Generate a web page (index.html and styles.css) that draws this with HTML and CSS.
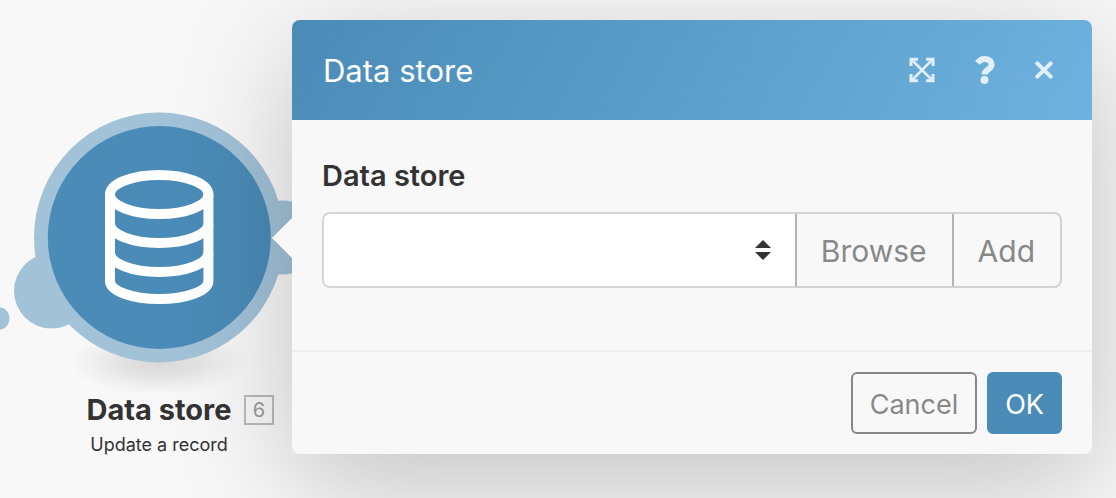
FILE: index.html
```html
<!DOCTYPE html>
<html lang="en">
<head>
<meta charset="utf-8">
<meta name="viewport" content="width=device-width, initial-scale=1">
<title>Data store</title>
<link rel="stylesheet" href="styles.css">
</head>
<body>
<main class="scenario">
  <figure class="module">
    <svg class="module-art" viewBox="0 0 292 392" aria-hidden="true">
      <defs>
        <radialGradient id="floor">
          <stop offset="0" stop-color="#000" stop-opacity=".13"/>
          <stop offset=".4" stop-color="#000" stop-opacity=".09"/>
          <stop offset=".7" stop-color="#000" stop-opacity=".04"/>
          <stop offset="1" stop-color="#000" stop-opacity="0"/>
        </radialGradient>
      </defs>
      <ellipse cx="159" cy="362" rx="90" ry="34" fill="url(#floor)"/>
      <g fill="#a2c2d8">
        <circle cx="-2" cy="318.500" r="11.500"/>
        <circle cx="51.500" cy="291" r="37.500"/>
        <circle cx="282" cy="237.500" r="37"/>
        <circle cx="159" cy="237.500" r="125"/>
      </g>
      <circle cx="159.300" cy="237.500" r="111.500" fill="#4a8bb7"/>
      <g fill="none" stroke="#fff" stroke-width="10">
        <ellipse cx="159.200" cy="194.500" rx="49.200" ry="19.500"/>
        <path d="M110 194.500V281C110 291 132 299 159.200 299S208.400 291 208.400 281V194.500"/>
        <path d="M110 223.500C110 234.500 132 243 159.200 243S208.400 234.500 208.400 223.500"/>
        <path d="M110 252.500C110 263.500 132 272 159.200 272S208.400 263.500 208.400 252.500"/>
      </g>
    </svg>
    <figcaption class="module-caption">
      <strong class="module-name">Data store</strong>
      <span class="module-id">6</span>
      <span class="module-action">Update a record</span>
    </figcaption>
  </figure>

  <form class="panel" role="dialog" aria-labelledby="panel-title">
    <header class="panel-header">
      <h1 class="panel-title" id="panel-title">Data store</h1>
      <button class="icon-button" type="button" aria-label="Expand">
        <svg width="26" height="26" viewBox="0 0 26 26" aria-hidden="true">
          <g fill="none" stroke="currentColor" stroke-width="2.500">
            <path d="M2 2L24 24M24 2L2 24"/>
            <path d="M2 9V2.200H9M17 2.200H24V9M24 17V23.800H17M9 23.800H2V17" stroke-width="3"/>
          </g>
        </svg>
      </button>
      <button class="icon-button" type="button" aria-label="Help">
        <svg width="20" height="28" viewBox="0 0 20 28" aria-hidden="true">
          <path d="M2.500 7C4.500 4.200 6.600 3 9.500 3C13.200 3 16.500 5 16.500 8.700C16.500 13.700 9.500 13.200 9.500 18.500" fill="none" stroke="currentColor" stroke-width="6"/>
          <circle cx="9.500" cy="24" r="4" fill="currentColor"/>
        </svg>
      </button>
      <button class="icon-button" type="button" aria-label="Close">
        <svg width="18" height="18" viewBox="0 0 18 18" aria-hidden="true">
          <path d="M2.300 2.300L15.700 15.700M15.700 2.300L2.300 15.700" fill="none" stroke="currentColor" stroke-width="4" stroke-linecap="round"/>
        </svg>
      </button>
    </header>

    <div class="panel-body">
      <label class="field-label" for="store">Data store</label>
      <div class="field-group">
        <div class="select-box">
          <select class="select" id="store"><option value=""></option></select>
          <svg class="select-arrows" width="16" height="20" viewBox="0 0 16 20" aria-hidden="true">
            <path d="M0 8L8 0L16 8ZM0 12H16L8 20Z" fill="currentColor"/>
          </svg>
        </div>
        <button class="addon" type="button">Browse</button>
        <button class="addon addon-last" type="button">Add</button>
      </div>
    </div>

    <footer class="panel-footer">
      <button class="button" type="button">Cancel</button>
      <button class="button button-primary" type="submit">OK</button>
    </footer>
  </form>
</main>
</body>
</html>
```
FILE: styles.css
```css
* {
  box-sizing: border-box;
}

body {
  margin: 0;
  background: #f8f8f8;
  color: #333;
  font-family: Inter, "Liberation Sans", sans-serif;
}

button,
select {
  margin: 0;
  font: inherit;
}

.scenario {
  display: flex;
  align-items: flex-start;
  min-height: 100vh;
  overflow: hidden;
}

/* Module bubble */
.module {
  flex: none;
  width: 292px;
  margin: 0;
}

.module-art {
  display: block;
  width: 100%;
}

.module-caption {
  display: grid;
  grid-template-columns: 144px 30px;
  justify-content: end;
  align-items: center;
  column-gap: 13px;
  row-gap: 6px;
  padding-right: 18px;
}

.module-name {
  font-size: 29px;
  line-height: 36px;
  font-weight: 700;
  white-space: nowrap;
  justify-self: center;
}

.module-id {
  border: 2px solid #bbb;
  color: #999;
  font-size: 20px;
  line-height: 26px;
  text-align: center;
}

.module-action {
  font-size: 18px;
  line-height: 22px;
  white-space: nowrap;
  justify-self: center;
}

/* Settings panel */
.panel {
  position: relative;
  flex: 1;
  min-width: 0;
  margin: 20px 24px 0 0;
  border-radius: 8px;
  background: #f8f8f8;
  box-shadow: 0 30px 120px rgba(0, 0, 0, 0.22);
}

.panel::before {
  content: "";
  position: absolute;
  top: 198px;
  left: -20px;
  border: solid transparent;
  border-width: 20px 20px 20px 0;
  border-right-color: #f8f8f8;
}

.panel-header {
  display: flex;
  align-items: center;
  gap: 40px;
  height: 100px;
  padding: 0 39px 0 31px;
  border-radius: 8px 8px 0 0;
  background: linear-gradient(120deg, #4a8bb7, #6eb2df);
  color: #fff;
}

.panel-title {
  flex: 1;
  margin: 0;
  padding-top: 2px;
  font-size: 31px;
  line-height: 40px;
  font-weight: 400;
}

.icon-button {
  display: flex;
  padding: 0;
  border: 0;
  background: none;
  color: #e2eef8;
}

.panel-body {
  padding: 38px 30px 62px;
}

.field-label {
  display: block;
  margin-bottom: 18px;
  font-size: 29px;
  line-height: 36px;
  font-weight: 600;
}

.field-group {
  display: flex;
  height: 76px;
}

.select-box {
  display: grid;
  flex: 1;
  align-items: center;
}

.select {
  grid-area: 1 / 1;
  width: 100%;
  height: 76px;
  padding: 0 56px 0 24px;
  border: 2px solid #d6d6d6;
  border-right: 0;
  border-radius: 8px 0 0 8px;
  background: #fff;
  color: #333;
  font-size: 30px;
  appearance: none;
}

.select-arrows {
  grid-area: 1 / 1;
  justify-self: end;
  margin-right: 24px;
  pointer-events: none;
}

.addon {
  padding: 2px 25px 0 26px;
  border: solid #d2d2d2;
  border-width: 2px 0;
  background: #f8f8f8;
  box-shadow: inset 2px 0 #b4b4b4;
  color: #888;
  font-size: 30px;
}

.addon-last {
  border-right-width: 2px;
  border-radius: 0 8px 8px 0;
}

.panel-footer {
  display: flex;
  justify-content: flex-end;
  gap: 10px;
  padding: 20px 30px;
  border-top: 2px solid #eee;
}

.button {
  height: 62px;
  padding: 2px 17px 0;
  border: 2px solid #888;
  border-radius: 6px;
  background: none;
  color: #888;
  font-size: 27px;
}

.button-primary {
  padding: 2px 16px 0;
  border-color: #4a8bb7;
  background: #4a8bb7;
  color: #fff;
}
```
